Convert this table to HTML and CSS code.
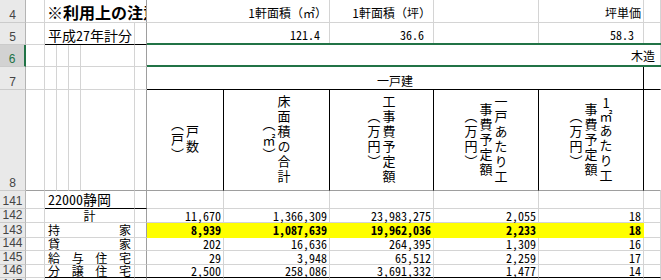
FILE: index.html
```html
<!DOCTYPE html>
<html lang="ja">
<head>
<meta charset="utf-8">
<title>Sheet</title>
<link rel="stylesheet" href="styles.css">
</head>
<body>
<div class="sheet">
  <div class="grid">
    <!-- row 4 -->
    <div class="hd">4</div>
    <div class="c"></div>
    <div class="c s5 fz title">※利用上の注意</div>
    <div class="c s2 lab">1軒面積（㎡）</div>
    <div class="c lab">1軒面積（坪）</div>
    <div class="c"></div>
    <div class="c lab">坪単価</div>
    <div class="c"></div>

    <!-- row 5 -->
    <div class="hd">5</div>
    <div class="c"></div>
    <div class="c s4 bb sub hw">平成27年計分</div>
    <div class="c bb fz"></div>
    <div class="c s2 num5 hw">121.4</div>
    <div class="c num5 hw">36.6</div>
    <div class="c"></div>
    <div class="c num5 hw">58.3</div>
    <div class="c"></div>

    <!-- row 6 -->
    <div class="hd on">6</div>
    <div class="c"></div>
    <div class="c"></div>
    <div class="c"></div>
    <div class="c"></div>
    <div class="c"></div>
    <div class="c fz"></div>
    <div class="c s6 mok">木造</div>

    <!-- row 7 -->
    <div class="hd">7</div>
    <div class="c"></div>
    <div class="c"></div>
    <div class="c"></div>
    <div class="c"></div>
    <div class="c"></div>
    <div class="c fz"></div>
    <div class="c s5 br bb ctr">一戸建</div>
    <div class="c bb nr"></div>

    <!-- row 8 -->
    <div class="hd">8</div>
    <div class="c fb"></div>
    <div class="c fb"></div>
    <div class="c fb"></div>
    <div class="c fb"></div>
    <div class="c fb"></div>
    <div class="c fb fz"></div>
    <div class="c vc br fb"><div class="vt">戸数<br>（戸）</div></div>
    <div class="c vc br fb"><div class="vt">床面積の合計<br>（㎡）</div></div>
    <div class="c vc br fb"><div class="vt">工事費予定額<br>（万円）</div></div>
    <div class="c vc br fb"><div class="vt">一戸あたり工<br>事費予定額<br>（万円）</div></div>
    <div class="c vc br fb"><div class="vt"><span class="up">1</span>㎡あたり工<br>事費予定額<br>（万円）</div></div>
    <div class="c fb nr"></div>

    <!-- row 141 -->
    <div class="hd">141</div>
    <div class="c"></div>
    <div class="c s4 bb sub hw">22000静岡</div>
    <div class="c bb fz"></div>
    <div class="c"></div>
    <div class="c"></div>
    <div class="c"></div>
    <div class="c"></div>
    <div class="c"></div>
    <div class="c"></div>

    <!-- row 142 -->
    <div class="hd">142</div>
    <div class="c"></div>
    <div class="c s4 rl ctr">計</div>
    <div class="c fz"></div>
    <div class="c num hw">11,670</div>
    <div class="c num hw">1,366,309</div>
    <div class="c num hw">23,983,275</div>
    <div class="c num hw">2,055</div>
    <div class="c num hw">18</div>
    <div class="c"></div>

    <!-- row 143 -->
    <div class="hd">143</div>
    <div class="c"></div>
    <div class="c s4 rl dist"><span>持</span><span>家</span></div>
    <div class="c fz"></div>
    <div class="c num hw y">8,939</div>
    <div class="c num hw y">1,087,639</div>
    <div class="c num hw y">19,962,036</div>
    <div class="c num hw y">2,233</div>
    <div class="c num hw y">18</div>
    <div class="c"></div>

    <!-- row 144 -->
    <div class="hd">144</div>
    <div class="c"></div>
    <div class="c s4 rl dist"><span>貸</span><span>家</span></div>
    <div class="c fz"></div>
    <div class="c num hw">202</div>
    <div class="c num hw">16,636</div>
    <div class="c num hw">264,395</div>
    <div class="c num hw">1,309</div>
    <div class="c num hw">16</div>
    <div class="c"></div>

    <!-- row 145 -->
    <div class="hd">145</div>
    <div class="c"></div>
    <div class="c s4 rl dist"><span>給</span><span>与</span><span>住</span><span>宅</span></div>
    <div class="c fz"></div>
    <div class="c num hw">29</div>
    <div class="c num hw">3,948</div>
    <div class="c num hw">65,512</div>
    <div class="c num hw">2,259</div>
    <div class="c num hw">17</div>
    <div class="c"></div>

    <!-- row 146 -->
    <div class="hd">146</div>
    <div class="c"></div>
    <div class="c s4 rl bb dist"><span>分</span><span>譲</span><span>住</span><span>宅</span></div>
    <div class="c bb fz"></div>
    <div class="c num hw bb">2,500</div>
    <div class="c num hw bb">258,086</div>
    <div class="c num hw bb">3,691,332</div>
    <div class="c num hw bb">1,477</div>
    <div class="c num hw bb">14</div>
    <div class="c bb"></div>

    <!-- row 147 -->
    <div class="hd">147</div>
    <div class="c"></div>
    <div class="c s4"></div>
    <div class="c fz"></div>
    <div class="c"></div>
    <div class="c"></div>
    <div class="c"></div>
    <div class="c"></div>
    <div class="c"></div>
    <div class="c"></div>
  </div>
  <div class="sel"></div>
</div>
</body>
</html>
```
FILE: styles.css
```css
* {
  box-sizing: border-box;
  margin: 0;
  padding: 0;
}

body {
  margin: 0;
  background: #ffffff;
  overflow: hidden;
  font-family: "Noto Sans CJK JP", sans-serif;
  color: #000000;
}

.sheet {
  position: relative;
  width: 661px;
  height: 280px;
  overflow: hidden;
}

.grid {
  display: grid;
  grid-template-columns: 26px 19px 12px 12px 12px 54px 12px 77px 106px 104px 105px 105px 17px;
  grid-template-rows: 23px 22px 22px 23px 101px 18px 14px 15px 13px 14px 13px 14px;
}

/* row headers */
.hd {
  background: #e9e9e9;
  border-right: 1px solid #b4b4b4;
  border-bottom: 1px solid #cbcbcb;
  color: #444444;
  font-family: "Liberation Sans", sans-serif;
  font-size: 12px;
  line-height: 12px;
  display: flex;
  align-items: flex-end;
  justify-content: center;
  padding-bottom: 1px;
}

.hd.on {
  background: #d2d2d2;
  color: #217346;
  border-right: 2px solid #217346;
}

/* cells */
.c {
  border-right: 1px solid #d4d4d4;
  border-bottom: 1px solid #d4d4d4;
  display: flex;
  align-items: flex-end;
  overflow: hidden;
  white-space: nowrap;
  min-width: 0;
  font-size: 12px;
  line-height: 14px;
  padding-bottom: 1px;
}

.s2 { grid-column: span 2; }
.s4 { grid-column: span 4; }
.s5 { grid-column: span 5; }
.s6 { grid-column: span 6; }

.hw { font-feature-settings: "hwid" 1; }

.fz { border-right-color: #9e9e9e; }
.fb { border-bottom-color: #9e9e9e; }
.bb { border-bottom-color: #000000; }
.br { border-right-color: #000000; }
.nr { border-right-color: transparent; }

.title {
  font-size: 16px;
  font-weight: 700;
  line-height: 18px;
  padding-left: 2px;
}

.sub {
  font-size: 14px;
  line-height: 16px;
  padding-left: 3px;
}

.lab {
  justify-content: flex-end;
  padding-right: 2px;
  padding-bottom: 2px;
}

.num5 {
  justify-content: flex-end;
  padding-right: 9px;
  padding-bottom: 2px;
}

.mok {
  justify-content: flex-end;
  align-items: center;
  padding-right: 5px;
  padding-bottom: 0;
}

.ctr {
  justify-content: center;
}

.rl {
  font-size: 12px;
  line-height: 12px;
  align-items: center;
  overflow: visible;
  padding-bottom: 0;
}

.dist {
  justify-content: space-between;
  padding-left: 3px;
  padding-right: 3px;
}

.num {
  justify-content: flex-end;
  align-items: center;
  overflow: visible;
  padding-right: 2px;
  padding-bottom: 0;
  line-height: 12px;
}

.y {
  background: #ffff00;
  border-right-color: transparent;
  border-bottom-color: transparent;
  font-weight: 700;
}

/* vertical header text */
.vc {
  justify-content: center;
  align-items: center;
  padding-bottom: 0;
}

.vt {
  writing-mode: vertical-rl;
  text-align: center;
  font-size: 13px;
  line-height: 15px;
  letter-spacing: 2px;
  height: 96px;
}

.up {
  text-combine-upright: all;
}

/* selection outline */
.sel {
  position: absolute;
  left: 147px;
  top: 43px;
  width: 520px;
  height: 24px;
  border-top: 2px solid #217346;
  border-bottom: 2px solid #217346;
}
```
